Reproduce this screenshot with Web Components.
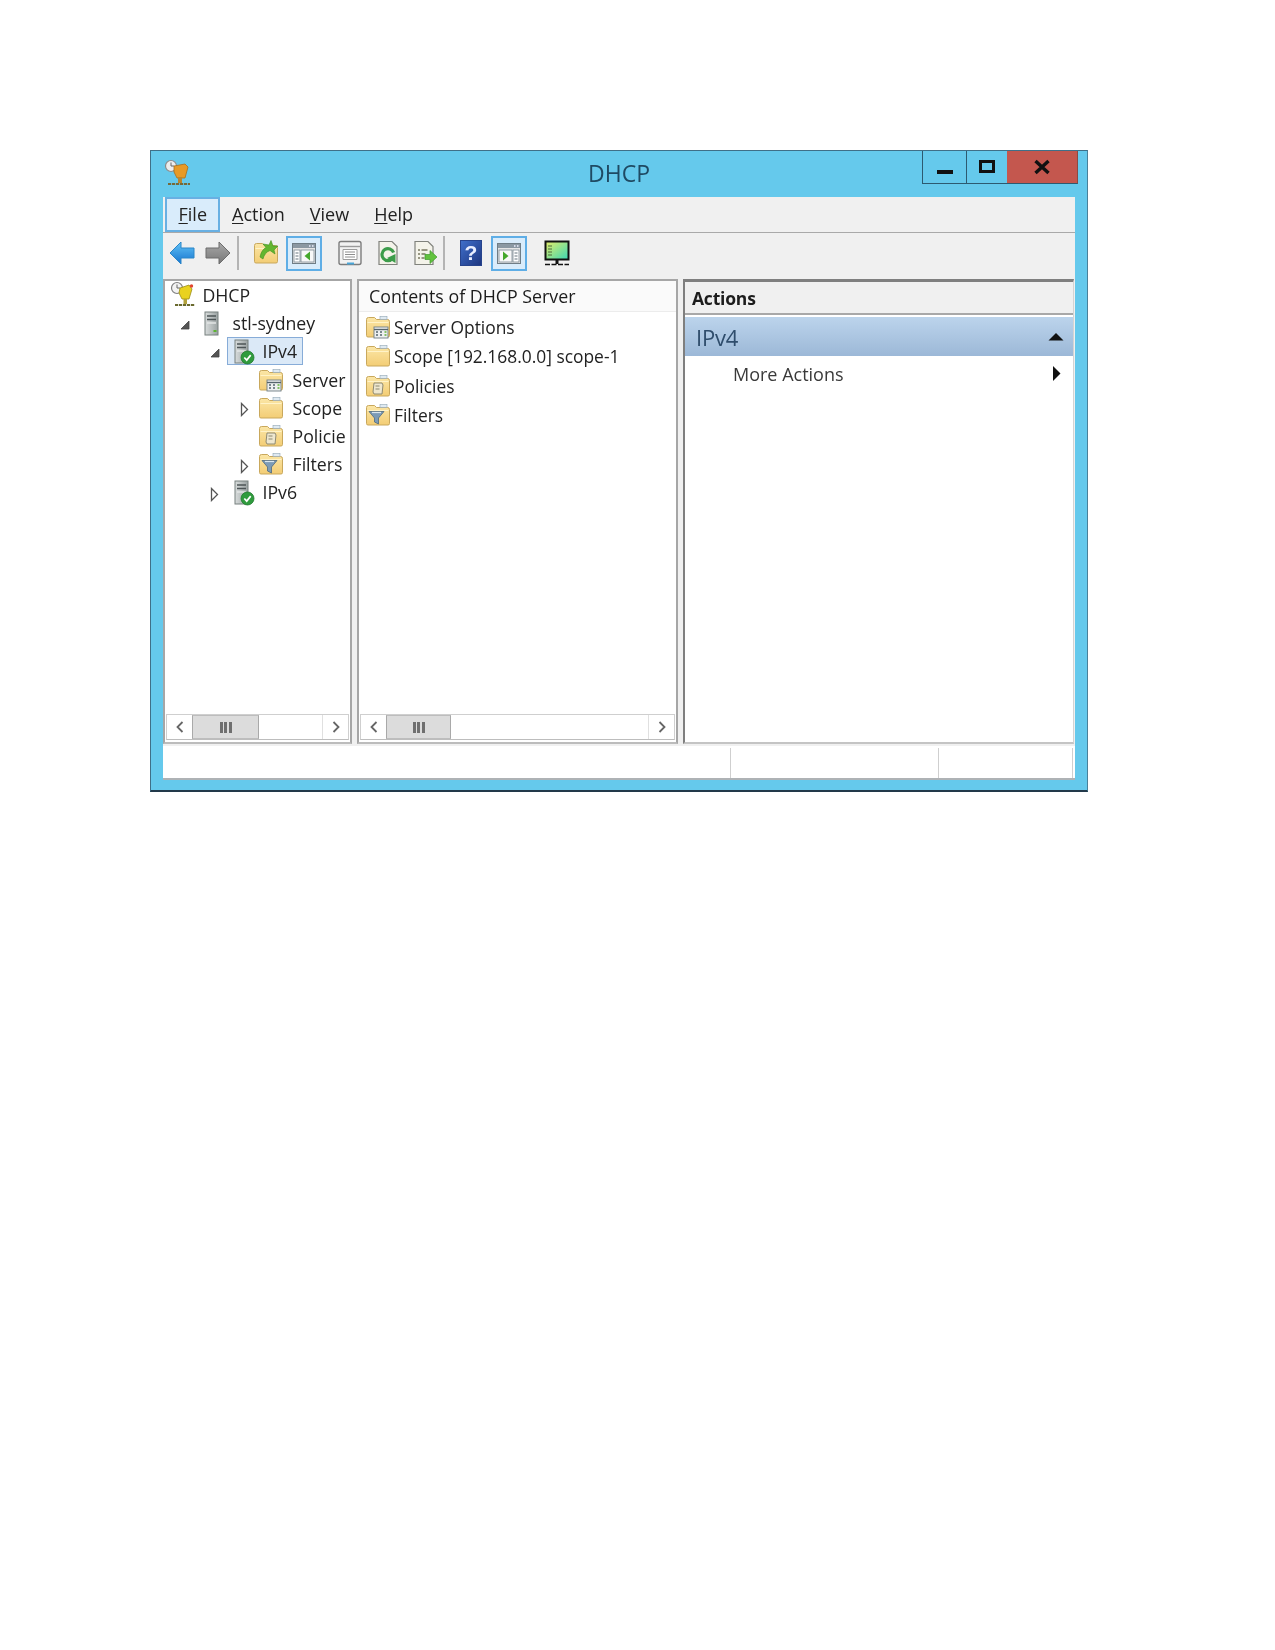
<!DOCTYPE html>
<html>
<head>
<meta charset="utf-8">
<title>DHCP</title>
<style>
    html, body { margin: 0; background: #fff; }
    body { padding: 150px 0 0 150px; height: 1500px; overflow: hidden; }
</style>
</head>
<body>
<dhcp-window>
    <span slot="title">DHCP</span>
    <menu-bar slot="menu">
        <menu-item active hot="F" rest="ile"></menu-item>
        <menu-item hot="A" rest="ction"></menu-item>
        <menu-item hot="V" rest="iew"></menu-item>
        <menu-item hot="H" rest="elp"></menu-item>
    </menu-bar>
    <tool-bar slot="tools">
        <tool-btn icon="back"></tool-btn>
        <tool-btn icon="forward"></tool-btn>
        <tool-sep></tool-sep>
        <tool-btn icon="up" style="margin-left:9.5px"></tool-btn>
        <tool-btn icon="showtree" active style="margin-left:1px"></tool-btn>
        <tool-btn icon="props" style="margin-left:10.5px"></tool-btn>
        <tool-btn icon="refresh" style="margin-left:1.5px"></tool-btn>
        <tool-btn icon="export"></tool-btn>
        <tool-sep></tool-sep>
        <tool-btn icon="help" style="margin-left:8.5px"></tool-btn>
        <tool-btn icon="showactions" active style="margin-left:2px"></tool-btn>
        <tool-btn icon="monitor" style="margin-left:12px"></tool-btn>
    </tool-bar>

    <mmc-pane slot="tree" style="width:189px">
        <tree-row level="0" icon="dhcp">DHCP</tree-row>
        <tree-row level="1" icon="server" arrow="open">stl-sydney</tree-row>
        <tree-row level="2" icon="servercheck" arrow="open" selected>IPv4</tree-row>
        <tree-row level="3" icon="folderopts">Server</tree-row>
        <tree-row level="3" icon="folder" arrow="closed">Scope</tree-row>
        <tree-row level="3" icon="folderpolicy">Policie</tree-row>
        <tree-row level="3" icon="folderfilter" arrow="closed">Filters</tree-row>
        <tree-row level="2" icon="servercheck" arrow="closed">IPv6</tree-row>
        <scroll-bar slot="scroll" thumb="67"></scroll-bar>
    </mmc-pane>

    <mmc-pane slot="list" style="width:321px">
        <list-header>Contents of DHCP Server</list-header>
        <list-row icon="folderopts">Server Options</list-row>
        <list-row icon="folder">Scope [192.168.0.0] scope-1</list-row>
        <list-row icon="folderpolicy">Policies</list-row>
        <list-row icon="folderfilter">Filters</list-row>
        <scroll-bar slot="scroll" thumb="65"></scroll-bar>
    </mmc-pane>

    <actions-pane slot="actions" heading="IPv4">
        <span>More Actions</span>
    </actions-pane>

    <status-bar slot="status"></status-bar>
</dhcp-window>

<script>
// icon bodies, all drawn on a 28x28 box
const FOLDER = `
    <path d="M1.5 6.5 q0-2 2-2 h6 l2 2 h11 q2 0 2 2 v14 q0 1.5-1.5 1.5 h-20 q-1.5 0-1.5-1.5z" fill="url(#gold)" stroke="#c9a85c" stroke-width="1"/>
    <path d="M2.5 9.5 h21" stroke="#fff3c8" stroke-width="1"/>`;
const TAB = `<rect x="15" y="3.5" width="7" height="3" fill="#dfeaf2" stroke="#8fa6b5" stroke-width=".6"/>`;
const TOWER = x => `
    <rect x="${x}" y="3" width="13" height="23" fill="url(#steel)" stroke="#77807f" stroke-width="1"/>
    <path d="M${x + 2} 7 h9 M${x + 2} 10.5 h9" stroke="#4d5557" stroke-width="1.4"/>
    <path d="M${x + 2} 14 h9" stroke="#e6e9e9" stroke-width="1.4"/>`;
const PANE_WINDOW = `
    <rect x="2.5" y="4.5" width="23" height="20" fill="#e6e6e6" stroke="#6f7d86" stroke-width="1"/>
    <rect x="3" y="5" width="22" height="4" fill="#8b98a2"/>
    <path d="M19 7 h1.5 M22 7 h1.5" stroke="#eef" stroke-width="1.4"/>`;
const DOC = `<path d="M5 2.5 h13 l5 5 v18 h-18z" fill="#f4f3ea" stroke="#80827c" stroke-width="1.2"/>`;
const ICONS = {
    back: `<path d="M2 14 L13 3 V9 H26 V19 H13 V25z" fill="url(#blue)" stroke="#2b86c8" stroke-width="1"/>`,
    forward: `<path d="M26 14 L15 3 V9 H2 V19 H15 V25z" fill="url(#grey)" stroke="#6d6d6d" stroke-width="1"/>`,
    up: FOLDER + `<path d="M7 18 C8 13 10 10 13 8.5 L10 5 L16 6 L18 1.5 L20 7 L25 7 L21 11 L22 15 L17 11.5 C13 13 11 16 10 20z" fill="#62b62f" stroke="#3f8f1e" stroke-width=".6"/>`,
    showtree: PANE_WINDOW + `
        <rect x="4" y="11" width="6" height="12" fill="#fff" stroke="#7d8b94" stroke-width=".8"/>
        <path d="M5.5 14 h3 M5.5 17 h3 M5.5 20 h3" stroke="#66757f" stroke-width="1.2"/>
        <rect x="11" y="11" width="13" height="12" fill="#f8f8f8" stroke="#7d8b94" stroke-width=".8"/>
        <path d="M20 12.5 V21.5 L14.5 17z" fill="#45a82c"/>`,
    showactions: PANE_WINDOW + `
        <rect x="4" y="11" width="13" height="12" fill="#f8f8f8" stroke="#7d8b94" stroke-width=".8"/>
        <path d="M8 12.5 V21.5 L13.5 17z" fill="#45a82c"/>
        <rect x="18" y="11" width="6" height="12" fill="#fff" stroke="#7d8b94" stroke-width=".8"/>
        <path d="M19.5 14 h3 M19.5 17 h3 M19.5 20 h3" stroke="#66757f" stroke-width="1.2"/>`,
    props: `
        <rect x="3" y="2.5" width="22" height="23" rx="2" fill="#f2f2f2" stroke="#7c7c7c" stroke-width="1.4"/>
        <path d="M4 7.5 h20" stroke="#9a9a9a" stroke-width="1.4"/>
        <path d="M7 10.5 h14 v10 h-14z" fill="#fff" stroke="#9c9c9c" stroke-width="1"/>
        <path d="M9 13 h10 M9 15.5 h10 M9 18 h10" stroke="#8e8e8e" stroke-width="1"/>
        <path d="M11 24.5 h7" stroke="#4aa6d8" stroke-width="2"/>`,
    refresh: DOC + `<path d="M18.6 19.5 a6 6 0 1 1 1-6" fill="none" stroke="#3c9c4a" stroke-width="3.2"/><path d="M13 19 L21.5 24 L21.5 15z" fill="#3c9c4a"/>`,
    export: DOC + `
        <path d="M8 11 h2 M11.5 11 h6 M8 15 h2 M11.5 15 h4 M8 19 h2 M11.5 19 h3" stroke="#7a7a62" stroke-width="1.4"/>
        <path d="M15 15.5 h5 v-4 l7 6.5 -7 6.5 v-4 h-5z" fill="#62c23e" stroke="#3d9a2c" stroke-width=".7"/>`,
    help: `
        <rect x="3.5" y="1.5" width="21" height="25" fill="url(#navy)" stroke="#27438c" stroke-width="1"/>
        <text x="14" y="21" text-anchor="middle" font-family="Liberation Sans, sans-serif" font-size="21" font-weight="700" fill="#e9eeff">?</text>`,
    monitor: `
        <rect x="2.5" y="2.5" width="23" height="18" fill="url(#screen)" stroke="#111" stroke-width="2"/>
        <path d="M5 7 h4 M5 10 h4 M5 13 h4 M5 16 h4" stroke="#4f6b3c" stroke-width="1.2"/>
        <path d="M14 21 v4" stroke="#111" stroke-width="3"/>
        <path d="M2 25.5 h24" stroke="#111" stroke-width="1.6" stroke-dasharray="5 1.5"/>`,
    dhcp: `
        <circle cx="9" cy="7" r="5.5" fill="#f3f3f3" stroke="#7f7f7f" stroke-width="1.2"/>
        <path d="M9 3.5 v3.5 h3" fill="none" stroke="#666" stroke-width="1"/>
        <path d="M12 7 l9-3 3 4 -3 10 h-7 l-3-6z" fill="#e9d21f" stroke="#9a8e16" stroke-width=".8"/>
        <circle cx="23.5" cy="5" r="1.7" fill="#e2452f"/>
        <path d="M15.5 18 h3.5 v5 h-3.5z" fill="#b3a23b"/>
        <path d="M7 24 h20" stroke="#6a6a2e" stroke-width="2" stroke-dasharray="3.2 .8"/>`,
    dhcptitle: `
        <circle cx="8" cy="7" r="5.5" fill="#ededed" stroke="#8b8b8b" stroke-width="1.2"/>
        <path d="M8 3.5 v3.5 h3" fill="none" stroke="#666" stroke-width="1"/>
        <path d="M11 7 l11-2 3 3 -3 11 h-8 l-3-6z" fill="#e79a26" stroke="#a96f1a" stroke-width=".8"/>
        <path d="M15 18 h4 v6 h-4z" fill="#b98630"/>
        <path d="M5 25 h22" stroke="#75693a" stroke-width="2" stroke-dasharray="3.2 .8"/>`,
    server: TOWER(7) + `<rect x="15.5" y="21" width="3" height="2" fill="#5cb531"/>`,
    servercheck: TOWER(7) + `
        <circle cx="19.5" cy="20.5" r="6.5" fill="#2f9b3d" stroke="#1f7a2c" stroke-width=".8"/>
        <path d="M16.3 20.5 l2.4 2.6 4-5" fill="none" stroke="#fff" stroke-width="1.7"/>`,
    folder: FOLDER + TAB,
    folderopts: FOLDER + TAB + `
        <rect x="9" y="14" width="14" height="11" fill="#eef0f0" stroke="#6f7d84" stroke-width=".9"/>
        <path d="M9 16.5 h14" stroke="#56656d" stroke-width="1.4"/>
        <path d="M11 19 h2 M15 19 h2 M11 22 h2 M15 22 h2" stroke="#56656d" stroke-width="1.6"/>
        <path d="M19.5 19 h2 M19.5 22 h2" stroke="#63b23a" stroke-width="1.6"/>`,
    folderpolicy: FOLDER + TAB + `
        <path d="M9 11 h8 l1 2 -1 9 h-8 l-1-2z" fill="#eee7cf" stroke="#8e8a73" stroke-width="1"/>
        <path d="M10.5 14 h4 M10.5 17 h4" stroke="#8a876f" stroke-width="1"/>`,
    folderfilter: FOLDER + TAB + `
        <path d="M4 10.5 h15 l-5.5 6.5 v6 l-4-2 v-4z" fill="#7c9bb6" stroke="#4e6a80" stroke-width=".8"/>
        <path d="M7 11.5 h9" stroke="#d9e6ef" stroke-width="1.2"/>`
};
const ICON_DEFS = `
    <defs>
        <linearGradient id="gold" x1="0" y1="0" x2="0" y2="1"><stop offset="0" stop-color="#fbe6a6"/><stop offset="1" stop-color="#f3cd75"/></linearGradient>
        <linearGradient id="steel" x1="0" y1="0" x2="1" y2="0"><stop offset="0" stop-color="#d8dcdc"/><stop offset="1" stop-color="#9aa2a2"/></linearGradient>
        <linearGradient id="blue" x1="0" y1="0" x2="0" y2="1"><stop offset="0" stop-color="#63c4f6"/><stop offset="1" stop-color="#1673cf"/></linearGradient>
        <linearGradient id="grey" x1="0" y1="0" x2="0" y2="1"><stop offset="0" stop-color="#a9a9a9"/><stop offset="1" stop-color="#777"/></linearGradient>
        <linearGradient id="navy" x1="0" y1="0" x2="1" y2="1"><stop offset="0" stop-color="#3f6fcb"/><stop offset="1" stop-color="#1d357f"/></linearGradient>
        <linearGradient id="screen" x1="0" y1="0" x2="1" y2="1"><stop offset="0" stop-color="#e6ee6a"/><stop offset="1" stop-color="#39d6b4"/></linearGradient>
    </defs>`;

function iconSvg(name) {
    return `<svg xmlns="http://www.w3.org/2000/svg" width="28" height="28" viewBox="0 0 28 28" style="display:block;flex:none">${ICON_DEFS}${ICONS[name] || ""}</svg>`;
}

// small helper so each class only has to say what is in its shadow root
class ShadowElement extends HTMLElement {
    constructor() {
        super();
        this.attachShadow({mode: "open"});
    }
    connectedCallback() {
        this.shadowRoot.innerHTML = this.render();
    }
}

class DhcpWindow extends ShadowElement {
    render() {
        return `
        <style>
            :host {
                display: flex;
                flex-direction: column;
                box-sizing: border-box;
                width: 938px;
                height: 642px;
                padding: 0 12px 10px;
                background: #65c9ec;
                border: 1px solid #3f6f88;
                border-right-color: #4a8099;
                border-bottom: 2px solid #22394a;
                font-family: "Open Sans", "Noto Sans", sans-serif;
                color: #1c1c1c;
                filter: blur(.6px);
            }
            .title {
                display: grid;
                grid-template-columns: 1fr auto 1fr;
                height: 46px;
                flex: none;
            }
            .title .logo { padding: 8px 0 0 0; }
            .title .text {
                font-size: 23px;
                line-height: 44px;
                color: #1f4a63;
            }
            .caption { justify-self: end; display: flex; height: 33px; margin-right: -3px; }
            .caption div {
                display: flex;
                align-items: center;
                justify-content: center;
                box-sizing: border-box;
                border: 1px solid #2d5a70;
                border-top: 0;
                border-right: 0;
            }
            .min { width: 44px; }
            .max { width: 41px; }
            .close { width: 71px; background: #c4574e; border-right: 1px solid #8a4a44 !important; border-left: 0 !important; }
            .body {
                flex: 1;
                display: flex;
                flex-direction: column;
                background: #f0f0f0;
                min-height: 0;
            }
            .panes {
                flex: 1;
                display: flex;
                gap: 5px;
                min-height: 0;
                padding-right: 1px;
            }
            ::slotted([slot="actions"]) { flex: 1; }
        </style>
        <div class="title">
            <div class="logo">${iconSvg("dhcptitle")}</div>
            <div class="text"><slot name="title"></slot></div>
            <div class="caption">
                <div class="min"><svg width="18" height="18" viewBox="0 0 18 18"><rect x="1" y="12" width="16" height="4" fill="#111"/></svg></div>
                <div class="max"><svg width="18" height="18" viewBox="0 0 18 18"><rect x="2.5" y="3.5" width="13" height="10" fill="none" stroke="#111" stroke-width="3"/></svg></div>
                <div class="close"><svg width="18" height="18" viewBox="0 0 18 18"><path d="M2.5 3 L15.5 15 M15.5 3 L2.5 15" stroke="#111" stroke-width="3.4"/></svg></div>
            </div>
        </div>
        <div class="body">
            <slot name="menu"></slot>
            <slot name="tools"></slot>
            <div class="panes">
                <slot name="tree"></slot>
                <slot name="list"></slot>
                <slot name="actions"></slot>
            </div>
            <slot name="status"></slot>
        </div>`;
    }
}

class MenuBar extends ShadowElement {
    render() {
        return `
        <style>
            :host {
                display: flex;
                align-items: stretch;
                box-sizing: border-box;
                height: 36px;
                padding-left: 2px;
                border-bottom: 1px solid #a9a9a9;
                font-size: 18px;
            }
        </style>
        <slot></slot>`;
    }
}

class MenuItem extends ShadowElement {
    render() {
        return `
        <style>
            :host {
                display: flex;
                align-items: center;
                box-sizing: border-box;
                padding: 0 11.5px 2px;
                border: 1px solid transparent;
                color: #222;
            }
            :host([active]) {
                background: #d9ecfb;
                border: 2px solid #68b0e3;
                padding: 0 10.5px 2px 11.5px;
            }
            u { text-underline-offset: 2px; }
        </style>
        <span><u>${this.getAttribute("hot")}</u>${this.getAttribute("rest")}</span>`;
    }
}

class ToolBar extends ShadowElement {
    render() {
        return `
        <style>
            :host {
                display: flex;
                align-items: center;
                box-sizing: border-box;
                height: 46px;
                padding: 0 0 6px 1px;
                flex: none;
            }
        </style>
        <slot></slot>`;
    }
}

class ToolBtn extends ShadowElement {
    render() {
        return `
        <style>
            :host {
                display: flex;
                align-items: center;
                justify-content: center;
                box-sizing: border-box;
                width: 36px;
                height: 35px;
                flex: none;
            }
            :host([active]) {
                background: #d9ecfb;
                border: 2px solid #5faee6;
            }
        </style>
        ${iconSvg(this.getAttribute("icon"))}`;
    }
}

class ToolSep extends ShadowElement {
    render() {
        return `
        <style>
            :host {
                display: block;
                width: 2px;
                height: 34px;
                margin-left: 1px;
                background: #b4b4b4;
                flex: none;
            }
        </style>`;
    }
}

class MmcPane extends ShadowElement {
    render() {
        return `
        <style>
            :host {
                display: flex;
                flex-direction: column;
                box-sizing: border-box;
                height: 100%;
                flex: none;
                background: #fff;
                border: 2px solid #a6a6a6;
                border-bottom-color: #bcbcbc;
                font-size: 17.7px;
            }
            .content { flex: 1; overflow: hidden; }
            .foot { padding: 0 0 2px 0; }
        </style>
        <div class="content"><slot></slot></div>
        <div class="foot"><slot name="scroll"></slot></div>`;
    }
}

class TreeRow extends ShadowElement {
    render() {
        const arrow = this.getAttribute("arrow");
        const level = this.getAttribute("level") || 0;
        let glyph = "";
        if (arrow === "open") {
            glyph = `<path d="M10 3 V11 H2z" fill="#555" stroke="#444" stroke-width=".8"/>`;
        } else if (arrow === "closed") {
            glyph = `<path d="M2.5 1.5 L8.5 7.5 L2.5 13.5z" fill="#fff" stroke="#555" stroke-width="1.3"/>`;
        }
        return `
        <style>
            :host {
                display: block;
                height: 28.2px;
                white-space: nowrap;
                color: #222;
            }
            .row {
                display: flex;
                align-items: center;
                height: 100%;
                padding-left: calc(9px + ${level} * 30px);
            }
            .arrow { width: 24px; margin: 4px 1.5px 0 -25.5px; height: 15px; flex: none; }
            .icon { margin-left: -6px; width: 34.5px; flex: none; }
            .sel { display: flex; align-items: center; height: 28px; }
            :host([selected]) .sel {
                background: #dbe9f7;
                box-shadow: inset 0 0 0 1px #87acd8;
                margin-left: -7px;
                padding-left: 7px;
                padding-right: 6px;
            }
        </style>
        <div class="row">
            <svg class="arrow" viewBox="0 0 24 15">${glyph}</svg>
            <div class="sel">
                <div class="icon">${iconSvg(this.getAttribute("icon"))}</div>
                <span><slot></slot></span>
            </div>
        </div>`;
    }
}

class ListHeader extends ShadowElement {
    render() {
        return `
        <style>
            :host {
                display: flex;
                align-items: center;
                box-sizing: border-box;
                height: 31px;
                padding-left: 10px;
                background: #fafafa;
                border-bottom: 1px solid #ececec;
                white-space: nowrap;
                font-size: 17.8px;
            }
        </style>
        <slot></slot>`;
    }
}

class ListRow extends ShadowElement {
    render() {
        return `
        <style>
            :host {
                display: flex;
                align-items: center;
                height: 29.5px;
                padding-left: 6px;
                white-space: nowrap;
                color: #222;
                font-size: 17.4px;
            }
            span { margin-left: 1px; }
        </style>
        ${iconSvg(this.getAttribute("icon"))}
        <span><slot></slot></span>`;
    }
}

class ScrollBar extends ShadowElement {
    render() {
        const chevron = d => `<svg width="10" height="14" viewBox="0 0 10 14"><path d="${d}" fill="none" stroke="#666" stroke-width="1.8"/></svg>`;
        return `
        <style>
            :host {
                display: flex;
                box-sizing: border-box;
                height: 26px;
                margin: 0 1px;
                border: 1px solid #cfcfcf;
                border-bottom-color: #bdbdbd;
                background: #fff;
            }
            .btn {
                display: flex;
                align-items: center;
                justify-content: center;
                width: 25px;
                flex: none;
            }
            .btn.right { border-left: 1px solid #e0e0e0; margin-left: auto; }
            .thumb {
                display: flex;
                align-items: center;
                justify-content: center;
                gap: 1.5px;
                box-sizing: border-box;
                width: ${this.getAttribute("thumb")}px;
                background: #dcdcdc;
                border: 1px solid #bdbdbd;
                border-left-color: #a9a9a9;
                border-right-color: #a9a9a9;
            }
            .thumb i { width: 3px; height: 11px; background: #6f6f6f; }
        </style>
        <div class="btn">${chevron("M7.5 2 L2.5 7 L7.5 12")}</div>
        <div class="thumb"><i></i><i></i><i></i></div>
        <div class="btn right">${chevron("M2.5 2 L7.5 7 L2.5 12")}</div>`;
    }
}

class ActionsPane extends ShadowElement {
    render() {
        return `
        <style>
            :host {
                display: flex;
                flex-direction: column;
                box-sizing: border-box;
                height: 100%;
                background: #fff;
                border-left: 2px solid #7f7f7f;
                border-top: 3px solid #7f7f7f;
                border-right: 1px solid #d4d4d4;
                border-bottom: 2px solid #c4c4c4;
                font-size: 18px;
            }
            .head {
                height: 31px;
                padding-left: 7px;
                display: flex;
                align-items: center;
                background: #f0f0f0;
                border-bottom: 2px solid #a8a8a8;
                font-weight: 700;
                font-size: 17.5px;
                letter-spacing: -.2px;
                color: #1c1c1c;
            }
            .group {
                display: flex;
                align-items: center;
                justify-content: space-between;
                height: 39px;
                margin-top: 2px;
                padding: 0 9px 0 11px;
                background: linear-gradient(#bcd4ec, #9cb8d7);
                font-size: 22px;
                letter-spacing: -.2px;
                color: #2f4d6c;
            }
            .item {
                display: flex;
                align-items: center;
                justify-content: space-between;
                height: 35px;
                padding: 0 12px 0 48px;
                color: #3a3a3a;
            }
        </style>
        <div class="head">Actions</div>
        <div class="group">
            <span>${this.getAttribute("heading")}</span>
            <svg width="16" height="9" viewBox="0 0 16 9"><path d="M8 1 L15.5 8.5 H.5z" fill="#111"/></svg>
        </div>
        <div class="item">
            <slot></slot>
            <svg width="9" height="15" viewBox="0 0 9 15"><path d="M1 0 L8.5 7.5 L1 15z" fill="#111"/></svg>
        </div>`;
    }
}

class StatusBar extends ShadowElement {
    render() {
        return `
        <style>
            :host {
                display: grid;
                grid-template-columns: 568px 208px 134px 1fr;
                box-sizing: border-box;
                height: 34px;
                margin-top: 2px;
                flex: none;
                background: #fff;
                border-bottom: 2px solid #aeb2b5;
                padding-top: 2px;
            }
            div { border-right: 1px solid #cfcfcf; }
            div:last-child { border: 0; }
        </style>
        <div></div><div></div><div></div><div></div>`;
    }
}

customElements.define("dhcp-window", DhcpWindow);
customElements.define("menu-bar", MenuBar);
customElements.define("menu-item", MenuItem);
customElements.define("tool-bar", ToolBar);
customElements.define("tool-btn", ToolBtn);
customElements.define("tool-sep", ToolSep);
customElements.define("mmc-pane", MmcPane);
customElements.define("tree-row", TreeRow);
customElements.define("list-header", ListHeader);
customElements.define("list-row", ListRow);
customElements.define("scroll-bar", ScrollBar);
customElements.define("actions-pane", ActionsPane);
customElements.define("status-bar", StatusBar);
</script>
</body>
</html>
